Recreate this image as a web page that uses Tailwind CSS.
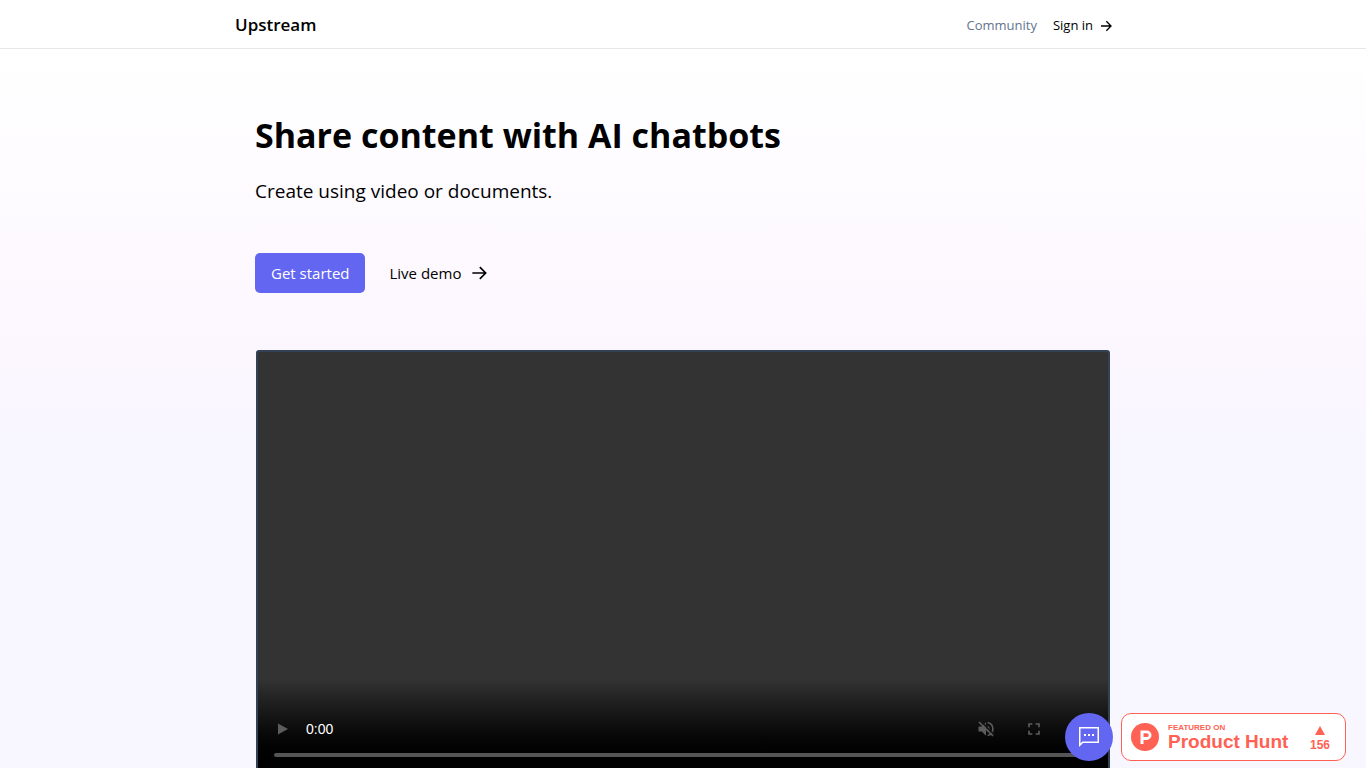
<!DOCTYPE html>
<html lang="en">
<head>
<meta charset="utf-8">
<meta name="viewport" content="width=device-width, initial-scale=1">
<title>Upstream</title>
<script src="https://cdn.jsdelivr.net/npm/@tailwindcss/browser@4"></script>
</head>
<body class="flex h-screen flex-col overflow-hidden bg-white font-['Segoe_UI','Open_Sans',sans-serif] text-black">
<header class="shrink-0 border-b border-gray-200 bg-white">
  <div class="mx-auto flex h-12 max-w-4xl items-center justify-between pr-4">
    <a href="#" class="pt-0.5 text-[17px] font-semibold">Upstream</a>
    <nav class="flex items-center gap-4 pt-1 text-[13px]">
      <a href="#" class="text-slate-500">Community</a>
      <a href="#" class="flex items-center gap-1.5">Sign in
        <svg class="size-4" viewBox="0 0 24 24" fill="none" stroke="currentColor" stroke-width="2" aria-hidden="true"><path d="M3 12h15M11 5l7 7-7 7"/></svg>
      </a>
    </nav>
  </div>
</header>
<main class="min-h-0 flex-1 bg-linear-to-b from-white from-0% via-[#fcf7ff] via-40% to-[#f8f6ff] to-55%">
  <div class="mx-auto max-w-4xl px-5 pt-16">
    <h1 class="text-[34px] leading-11 font-bold">Share content with AI chatbots</h1>
    <p class="mt-5 text-[19px] leading-7">Create using video or documents.</p>
    <div class="mt-12 flex items-center gap-6">
      <button type="button" class="h-10 rounded-[5px] bg-[#6366f1] px-4 text-[15px] text-white">Get started</button>
      <a href="#" class="flex items-center gap-2 text-[15px]">Live demo
        <svg class="size-5" viewBox="0 0 24 24" fill="none" stroke="currentColor" stroke-width="2" aria-hidden="true"><path d="M4 12h16M13 5l7 7-7 7"/></svg>
      </a>
    </div>
    <section aria-label="Demo video" class="mx-px mt-[57px] flex aspect-[2/1] flex-col justify-end rounded-[3px] border-2 border-[#334155] bg-[#333]">
      <div class="flex h-24 flex-col justify-end bg-linear-to-b from-[#333] to-black px-4 pb-[18px] font-['Liberation_Sans',sans-serif]">
        <div class="flex h-12 items-center text-sm text-white">
          <button type="button" aria-label="Play" class="mr-4"><svg class="size-4" viewBox="0 0 16 16" fill="#5c5c5c"><path d="M4 2.500v11l10-5.500z"/></svg></button>
          <span>0:00</span>
          <button type="button" aria-label="Unmute" class="ml-auto"><svg class="size-5" viewBox="0 0 24 24" fill="none"><path d="M3 9h4l5-5v16l-5-5H3z" fill="#5c5c5c"/><path d="M14 8a4.500 4.500 0 0 1 0 8z" fill="#5c5c5c"/><path d="M14 4.200a8 8 0 0 1 0 15.600" stroke="#5c5c5c" stroke-width="2"/><path d="M5 2 22 19" stroke="#151515" stroke-width="2"/><path d="M3.600 3.600 20.400 20.400" stroke="#5c5c5c" stroke-width="2"/></svg></button>
          <button type="button" aria-label="Full screen" class="mx-7"><svg class="size-5" viewBox="0 0 24 24" fill="#5c5c5c"><path d="M7 14H5v5h5v-2H7v-3zm-2-4h2V7h3V5H5v5zm12 7h-3v2h5v-5h-2v3zM14 5v2h3v3h2V5h-5z"/></svg></button>
          <button type="button" aria-label="More options"><svg class="size-5" viewBox="0 0 24 24" fill="#5c5c5c"><path d="M12 8a2 2 0 1 0 0-4 2 2 0 0 0 0 4zm0 2a2 2 0 1 0 0 4 2 2 0 0 0 0-4zm0 6a2 2 0 1 0 0 4 2 2 0 0 0 0-4z"/></svg></button>
        </div>
        <div class="h-1 rounded-full bg-[#555]"></div>
      </div>
    </section>
  </div>
</main>
<div class="fixed right-5 bottom-[7px] flex items-center gap-2 font-['Liberation_Sans',sans-serif]">
  <button type="button" aria-label="Chat" class="flex size-12 items-center justify-center rounded-full bg-[#6366f1]">
    <svg class="size-6" viewBox="0 0 24 24" fill="#fff"><path d="M2 22V2h20v16H6zM3.500 18.500 5.400 16.500H20.500V3.500H3.500z" fill-rule="evenodd"/><path d="M7 9h2v2H7zM11 9h2v2h-2zM15 9h2v2h-2z"/></svg>
  </button>
  <a href="#" class="flex h-12 w-[225px] items-center rounded-[10px] border border-[#ff6154] bg-white px-[9px] font-bold text-[#ff6154]">
    <svg class="size-7" viewBox="0 0 28 28" aria-hidden="true"><circle cx="14" cy="14" r="14" fill="#ff6154"/><path d="M9.500 7.500h6.300a4.700 4.700 0 0 1 0 9.400h-3.300v4.100h-3zM12.500 10.300v3.800h3.300a1.900 1.900 0 0 0 0-3.800z" fill="#fff" fill-rule="evenodd"/></svg>
    <span class="ml-[9px] flex flex-col pt-0.5"><span class="text-[8px] leading-2">FEATURED ON</span><span class="text-[19px] leading-5">Product Hunt</span></span>
    <span class="mr-1.5 ml-auto flex flex-col items-center gap-1 pt-0.5"><svg class="h-[9px] w-[10px]" viewBox="0 0 10 9" fill="currentColor" aria-hidden="true"><path d="M5 0l5 9H0z"/></svg><span class="text-xs leading-3">156</span></span>
  </a>
</div>
</body>
</html>
